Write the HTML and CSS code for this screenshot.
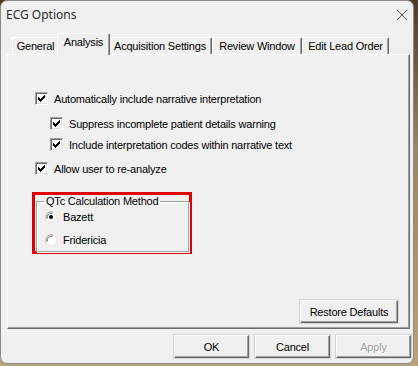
FILE: index.html
```html
<!DOCTYPE html>
<html>
<head>
<meta charset="utf-8">
<title>ECG Options</title>
<link rel="stylesheet" href="styles.css">
</head>
<body>
<div class="window">
  <div class="titlebar">
    <span class="title">ECG Options</span>
    <svg class="close" width="12" height="12" viewBox="0 0 12 12"><path d="M1 1L11 11M11 1L1 11" stroke="#5a5a5a" stroke-width="1" fill="none"/></svg>
  </div>
  <div class="tabs">
    <div class="tab tab-general">General</div>
    <div class="tab active tab-analysis">Analysis</div>
    <div class="tab tab-acq">Acquisition Settings</div>
    <div class="tab tab-review">Review Window</div>
    <div class="tab tab-edit">Edit Lead Order</div>
  </div>
  <div class="panel">
    <div class="options">
      <div class="opt row1"><span class="cb"><svg width="13" height="13" viewBox="0 0 13 13"><path d="M3 5h1v3h-1zM4 6h1v3h-1zM5 7h1v3h-1zM6 6h1v3h-1zM7 5h1v3h-1zM8 4h1v3h-1zM9 3h1v3h-1z" fill="#000"/></svg></span><span>Automatically include narrative interpretation</span></div>
      <div class="opt sub row2"><span class="cb"><svg width="13" height="13" viewBox="0 0 13 13"><path d="M3 5h1v3h-1zM4 6h1v3h-1zM5 7h1v3h-1zM6 6h1v3h-1zM7 5h1v3h-1zM8 4h1v3h-1zM9 3h1v3h-1z" fill="#000"/></svg></span><span>Suppress incomplete patient details warning</span></div>
      <div class="opt sub row3"><span class="cb"><svg width="13" height="13" viewBox="0 0 13 13"><path d="M3 5h1v3h-1zM4 6h1v3h-1zM5 7h1v3h-1zM6 6h1v3h-1zM7 5h1v3h-1zM8 4h1v3h-1zM9 3h1v3h-1z" fill="#000"/></svg></span><span>Include interpretation codes within narrative text</span></div>
      <div class="opt row4"><span class="cb"><svg width="13" height="13" viewBox="0 0 13 13"><path d="M3 5h1v3h-1zM4 6h1v3h-1zM5 7h1v3h-1zM6 6h1v3h-1zM7 5h1v3h-1zM8 4h1v3h-1zM9 3h1v3h-1z" fill="#000"/></svg></span><span>Allow user to re-analyze</span></div>
    </div>
    <div class="highlight">
      <fieldset class="group">
        <legend>QTc Calculation Method</legend>
        <div class="radio-row first">
          <svg class="radio" width="12" height="12" viewBox="0 0 12 12">
            <circle cx="6" cy="6" r="5.5" fill="#fff" stroke="#e6e6e6"/>
            <path d="M1.3 8.2A5.2 5.2 0 0 1 8.2 1.3" stroke="#a0a0a0" fill="none"/>
            <path d="M2.4 7.4A4 4 0 0 1 7.4 2.4" stroke="#696969" fill="none"/>
            <circle cx="6" cy="6" r="2" fill="#000"/>
          </svg>
          <span>Bazett</span>
        </div>
        <div class="radio-row second">
          <svg class="radio" width="12" height="12" viewBox="0 0 12 12">
            <circle cx="6" cy="6" r="5.5" fill="#fff" stroke="#e6e6e6"/>
            <path d="M1.3 8.2A5.2 5.2 0 0 1 8.2 1.3" stroke="#a0a0a0" fill="none"/>
            <path d="M2.4 7.4A4 4 0 0 1 7.4 2.4" stroke="#696969" fill="none"/>
          </svg>
          <span>Fridericia</span>
        </div>
      </fieldset>
    </div>
    <div class="btn restore">Restore Defaults</div>
  </div>
  <div class="footer">
    <div class="btn">OK</div>
    <div class="btn">Cancel</div>
    <div class="btn disabled">Apply</div>
  </div>
</div>
</body>
</html>
```

FILE: styles.css
```css
html, body {
  margin: 0;
  padding: 0;
}
body {
  width: 418px;
  height: 366px;
  background: linear-gradient(180deg, #4a3b2c 0%, #9a8566 40%, #b9a27c 100%);
  font-family: "Liberation Sans", Arial, sans-serif;
  font-size: 11px;
  letter-spacing: -0.2px;
  color: #000;
  overflow: hidden;
}
.window {
  box-sizing: border-box;
  width: 414px;
  height: 364px;
  background: #f0f0f0;
  border: 1px solid #8a8a8a;
  border-radius: 7px;
  display: flex;
  flex-direction: column;
}
.titlebar {
  height: 29px;
  display: flex;
  align-items: center;
  justify-content: space-between;
  padding: 0 5px 2px 5px;
  box-sizing: border-box;
}
.title {
  font-family: "Noto Sans", "Open Sans", sans-serif;
  font-size: 12px;
  letter-spacing: 0;
  color: #2b2b2b;
}
.close {
  margin-right: 0;
}
.tabs {
  display: flex;
  align-items: flex-end;
  height: 21px;
  margin-top: 3px;
  padding-left: 11px;
  position: relative;
  z-index: 2;
}
.tab {
  box-sizing: border-box;
  height: 17px;
  padding: 2px 0 0 0;
  text-align: center;
  border-top: 1px solid #fff;
  border-left: 1px solid #fff;
  border-right: 1px solid #696969;
  box-shadow: inset -1px 0 0 #a0a0a0;
  border-radius: 2px 2px 0 0;
  background: #f0f0f0;
  white-space: nowrap;
  line-height: 13px;
}
.tab.active {
  height: 22px;
  margin: 0 -2px -1px -2px;
  padding-top: 2px;
  position: relative;
  z-index: 3;
}
.tab-general { width: 47px; }
.tab-analysis { width: 53px; }
.tab-acq { width: 104px; }
.tab-review { width: 90px; }
.tab-edit { width: 87px; }

.panel {
  box-sizing: border-box;
  margin-left: 6px;
  width: 403px;
  height: 275px;
  border-top: 1px solid #fff;
  border-left: 1px solid #fff;
  border-right: 1px solid #696969;
  border-bottom: 1px solid #696969;
  box-shadow: inset -1px -1px 0 #a0a0a0;
  display: flex;
  flex-direction: column;
  position: relative;
  z-index: 1;
}
.options {
  padding-top: 37px;
  padding-left: 27px;
  display: flex;
  flex-direction: column;
}
.opt {
  display: flex;
  align-items: center;
  height: 13px;
  gap: 6px;
  white-space: nowrap;
}
.opt.sub { padding-left: 15px; }
.row2 { margin-top: 12px; }
.row3 { margin-top: 8px; }
.row4 { margin-top: 11px; }
.cb {
  box-sizing: border-box;
  width: 13px;
  height: 13px;
  background: #fff;
  border-top: 1px solid #a0a0a0;
  border-left: 1px solid #a0a0a0;
  border-right: 1px solid #fff;
  border-bottom: 1px solid #fff;
  box-shadow: inset 1px 1px 0 #696969, inset -1px -1px 0 #e3e3e3;
  flex: none;
}
.cb svg {
  display: block;
  margin: -1px 0 0 -1px;
}
.highlight {
  box-sizing: border-box;
  margin: 17px 0 0 24px;
  width: 160px;
  height: 62px;
  border: 3px solid #e00000;
  padding: 0;
}
.group {
  box-sizing: border-box;
  margin: 0 0 0 1px;
  padding: 0 0 0 8px;
  width: 153px;
  height: 57px;
  border: 1px solid #a0a0a0;
  box-shadow: inset 1px 1px 0 #fff, 1px 1px 0 #fff;
  min-width: 0;
}
.group legend {
  padding: 0 2px;
  margin-left: -1px;
  font-size: 11px;
  line-height: 13px;
}
.radio-row {
  display: flex;
  align-items: center;
  gap: 6px;
  height: 13px;
}
.radio-row.first { margin-top: 2px; }
.radio-row.second { margin-top: 10px; }
.radio { display: block; flex: none; }

.btn {
  box-sizing: border-box;
  width: 75px;
  height: 23px;
  border-top: 1px solid #fff;
  border-left: 1px solid #fff;
  border-right: 1px solid #696969;
  border-bottom: 1px solid #696969;
  box-shadow: inset -1px -1px 0 #a0a0a0;
  outline: 1px solid #d4d4d4;
  background: #f0f0f0;
  display: flex;
  align-items: center;
  justify-content: center;
  white-space: nowrap;
}
.restore {
  width: 98px;
  margin-top: auto;
  margin-bottom: 5px;
  align-self: flex-end;
  margin-right: 11px;
}
.footer {
  display: flex;
  justify-content: flex-end;
  gap: 6px;
  padding-top: 6px;
  padding-right: 2px;
}
.btn.disabled {
  color: #a0a0a0;
  text-shadow: 1px 1px 0 #fff;
}
```
